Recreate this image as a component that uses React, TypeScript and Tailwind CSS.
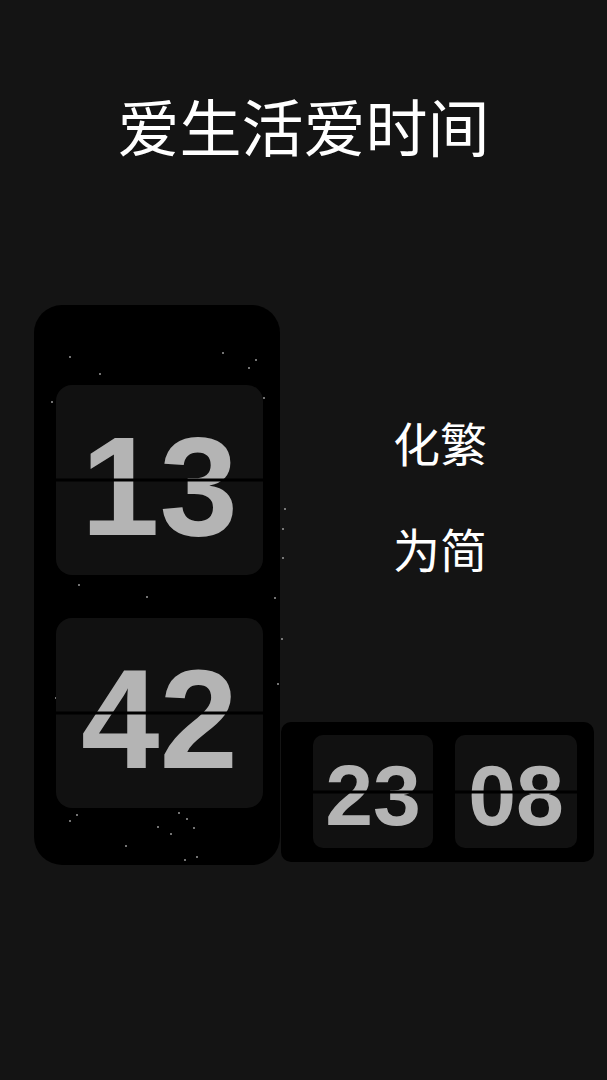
import React from 'react';

const cjk = { fontFamily: '"Noto Sans CJK SC", "Noto Sans", sans-serif' };
const digitFont = { fontFamily: '"Liberation Sans", Arial, sans-serif' };

// star dots inside the tall panel, relative to its top-left corner
const stars: [number, number, number][] = [
  [35, 51, 2], [65, 68, 2], [188, 47, 1.5], [221, 54, 2], [214, 62, 2], [17, 96, 1.5],
  [229, 92, 2], [248, 223, 1.5], [248, 252, 1.5], [250, 203, 1.5], [44, 279, 2],
  [112, 291, 2], [240, 292, 1.5], [247, 333, 1.5], [243, 378, 1.5], [21, 392, 1.5],
  [42, 509, 2], [35, 515, 1.5], [144, 507, 2], [152, 513, 2], [159, 522, 2],
  [123, 521, 1.5], [136, 528, 1.5], [91, 540, 2], [150, 554, 2], [162, 551, 1.5],
];

function FlipCard({ value, big }: { value: string; big?: boolean }) {
  return (
    <div
      className={
        big
          ? 'relative flex h-[190px] w-[207px] items-center justify-center rounded-[16px] bg-[#111111] pt-[13px]'
          : 'relative flex h-[113px] items-center justify-center rounded-[10px] bg-[#111111] pt-[7px]'
      }
    >
      <span
        className={
          big
            ? 'text-[141px] font-bold leading-none text-[#b4b4b4]'
            : 'text-[86px] font-bold leading-none text-[#b4b4b4]'
        }
        style={digitFont}
      >
        {value}
      </span>
      <div className="absolute left-0 right-0 top-1/2 h-[3px] -translate-y-1/2 bg-black" />
    </div>
  );
}

export default function App() {
  return (
    <div className="h-[1080px] w-[607px] overflow-hidden bg-[#141414]">
      <h1
        className="pt-[94px] text-center text-[62px] font-normal leading-none text-white"
        style={cjk}
      >
        爱生活爱时间
      </h1>

      <div className="mt-[149px] flex items-start pl-[34px]">
        <div className="relative flex h-[560px] w-[246px] shrink-0 flex-col gap-[43px] rounded-[28px] bg-black pl-[22px] pt-[80px]">
          {stars.map(([x, y, s], i) => (
            <span
              key={i}
              className="absolute rounded-full bg-[#9a9a9a]"
              style={{ left: x, top: y, width: s, height: s }}
            />
          ))}
          <FlipCard value="13" big />
          <FlipCard value="42" big />
        </div>

        <div className="flex h-[557px] w-[314px] flex-col pl-[1px]">
          <div
            className="flex flex-col gap-[59px] pl-[112px] pt-[113px] text-[47px] leading-none text-white"
            style={cjk}
          >
            <span>化繁</span>
            <span>为简</span>
          </div>
          <div className="mt-auto grid h-[140px] grid-cols-[120px_122px] gap-[22px] rounded-[10px] bg-black pl-[32px] pt-[13px]">
            <FlipCard value="23" />
            <FlipCard value="08" />
          </div>
        </div>
      </div>
    </div>
  );
}
